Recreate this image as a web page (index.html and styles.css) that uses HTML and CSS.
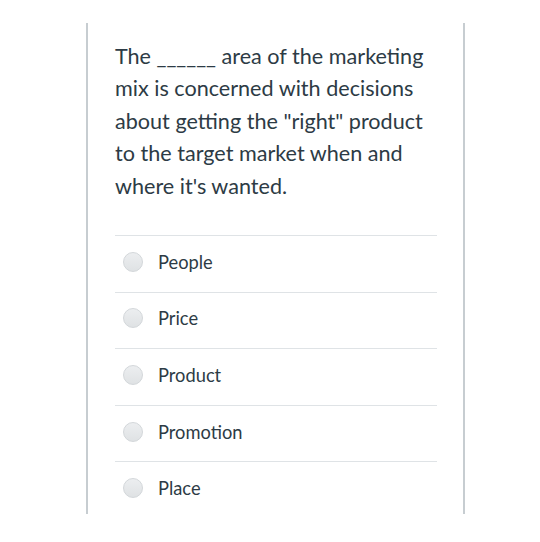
FILE: index.html
```html
<!DOCTYPE html>
<html>
<head>
<meta charset="utf-8">
<link rel="stylesheet" href="styles.css">
</head>
<body>
<div class="panel">
  <div class="question">The ______ area of the marketing mix is concerned with decisions about getting the "right" product to the target market when and where it's wanted.</div>
  <ul class="answers">
    <li class="answer"><span class="radio"></span><span class="label">People</span></li>
    <li class="answer"><span class="radio"></span><span class="label">Price</span></li>
    <li class="answer"><span class="radio"></span><span class="label">Product</span></li>
    <li class="answer"><span class="radio"></span><span class="label">Promotion</span></li>
    <li class="answer"><span class="radio"></span><span class="label">Place</span></li>
  </ul>
</div>
</body>
</html>
```
FILE: styles.css
```css
html, body {
  margin: 0;
  padding: 0;
  background: #ffffff;
}
body {
  font-family: Lato, "Open Sans", sans-serif;
  color: #2d3b45;
  padding-top: 23px;
}
.panel {
  margin-left: 86px;
  width: 379px;
  height: 491px;
  border-left: 2px solid #c7cdd1;
  border-right: 2px solid #c7cdd1;
  padding: 0 26px 0 27px;
  box-sizing: border-box;
}
.question {
  font-size: 21.6px;
  line-height: 32.5px;
  padding-top: 16.5px;
  padding-bottom: 33px;
}
.answers {
  list-style: none;
  margin: 0;
  padding: 0;
}
.answer {
  display: flex;
  align-items: center;
  height: 56.6px;
  border-top: 1px solid #dfe3e6;
  box-sizing: border-box;
  padding-left: 8px;
  padding-bottom: 4px;
}
.radio {
  width: 20px;
  height: 20px;
  border-radius: 50%;
  background: linear-gradient(#eceef0, #dfe2e4);
  border: 1px solid #d3d7da;
  box-sizing: border-box;
  margin-right: 15px;
  flex: none;
}
.label {
  font-size: 18.3px;
}
```
